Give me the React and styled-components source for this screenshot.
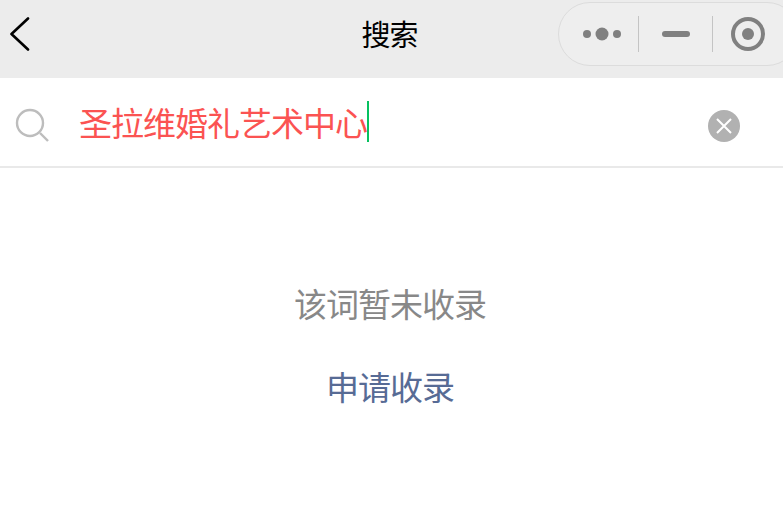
import styled, { createGlobalStyle } from "styled-components";

const GlobalStyle = createGlobalStyle`
  html, body {
    margin: 0;
    padding: 0;
    height: 100%;
    background: #fff;
    overflow: hidden;
    font-family: "Noto Sans CJK SC", "Liberation Sans", sans-serif;
  }
`;

const Page = styled.div`
  width: 783px;
  height: 513px;
  overflow: hidden;
  display: flex;
  flex-direction: column;
`;

const NavBar = styled.header`
  height: 78px;
  flex-shrink: 0;
  background: #ececec;
  display: grid;
  grid-template-columns: 1fr auto 1fr;
  align-items: start;
`;

const BackButton = styled.div`
  padding: 17px 0 0 10px;
  line-height: 0;
`;

const NavTitle = styled.div`
  font-size: 29px;
  letter-spacing: -1px;
  line-height: 34px;
  padding: 16px 4px 0 0;
  color: #000;
`;

const Capsule = styled.div`
  justify-self: end;
  margin: 2px -16px 0 0;
  width: 241px;
  height: 64px;
  box-sizing: border-box;
  display: flex;
  align-items: center;
  border: 1px solid #dcdcdc;
  border-radius: 32px;
  background: #eeeeee;
`;

const CapsuleCell = styled.div`
  width: ${(p) => p.$width}px;
  height: 36px;
  padding-left: ${(p) => p.$inset || 0}px;
  flex-shrink: 0;
  display: flex;
  align-items: center;
  justify-content: center;
  box-sizing: border-box;
  border-right: ${(p) => (p.$divider ? "1px solid #c4c4c4" : "none")};
  line-height: 0;
`;

const SearchBar = styled.div`
  height: 90px;
  flex-shrink: 0;
  box-sizing: border-box;
  border-bottom: 2px solid #e9e9e9;
  display: flex;
  align-items: center;
  padding: 0 43px 0 15px;
`;

const SearchIcon = styled.div`
  width: 34px;
  height: 36px;
  margin-top: 8px;
  line-height: 0;
  flex-shrink: 0;
`;

const Query = styled.div`
  flex: 1;
  margin-left: 30px;
  display: flex;
  align-items: center;
  font-size: 33px;
  letter-spacing: -1px;
  line-height: 42px;
  color: #fb5352;
  white-space: nowrap;
`;

const Caret = styled.span`
  width: 2px;
  height: 41px;
  margin-top: -1px;
  background: #07c160;
`;

const ClearButton = styled.div`
  width: 32px;
  height: 32px;
  margin-top: 8px;
  border-radius: 50%;
  background: #b1b1b1;
  display: flex;
  align-items: center;
  justify-content: center;
  flex-shrink: 0;
`;

const Empty = styled.main`
  display: flex;
  flex-direction: column;
  align-items: center;
  padding: 112px 3px 0 0;
`;

const EmptyText = styled.div`
  font-size: 33px;
  letter-spacing: -1px;
  line-height: 46px;
  color: #888888;
`;

const ApplyLink = styled.div`
  font-size: 33px;
  letter-spacing: -1px;
  line-height: 46px;
  margin-top: 37px;
  color: #576b95;
`;

const App = () => (
  <Page>
    <GlobalStyle />
    <NavBar>
      <BackButton>
        <svg width="20" height="34" viewBox="0 0 20 34" fill="none">
          <path d="M18 1.5 1.5 17 18 32.5" stroke="#000" strokeWidth="2.6" strokeLinecap="round" strokeLinejoin="round" />
        </svg>
      </BackButton>
      <NavTitle>搜索</NavTitle>
      <Capsule>
        <CapsuleCell $width={80} $inset={7} $divider>
          <svg width="38" height="14" viewBox="0 0 38 14" fill="#808080">
            <circle cx="4" cy="7" r="4" />
            <circle cx="19" cy="7" r="6.5" />
            <circle cx="34" cy="7" r="4" />
          </svg>
        </CapsuleCell>
        <CapsuleCell $width={74} $divider>
          <svg width="28" height="6" viewBox="0 0 28 6" fill="#808080">
            <rect width="28" height="6" rx="3" />
          </svg>
        </CapsuleCell>
        <CapsuleCell $width={70}>
          <svg width="34" height="34" viewBox="0 0 34 34" fill="none">
            <circle cx="17" cy="17" r="15" stroke="#808080" strokeWidth="4" />
            <circle cx="17" cy="17" r="6" fill="#808080" />
          </svg>
        </CapsuleCell>
      </Capsule>
    </NavBar>
    <SearchBar>
      <SearchIcon>
        <svg width="34" height="36" viewBox="0 0 34 36" fill="none">
          <circle cx="15" cy="15" r="13" stroke="#bdbdbd" strokeWidth="2.4" />
          <path d="M25 25 33 33" stroke="#bdbdbd" strokeWidth="2.4" />
        </svg>
      </SearchIcon>
      <Query>
        圣拉维婚礼艺术中心
        <Caret />
      </Query>
      <ClearButton>
        <svg width="18" height="18" viewBox="0 0 18 18" fill="none">
          <path d="M2 2 16 16M16 2 2 16" stroke="#fff" strokeWidth="2" />
        </svg>
      </ClearButton>
    </SearchBar>
    <Empty>
      <EmptyText>该词暂未收录</EmptyText>
      <ApplyLink>申请收录</ApplyLink>
    </Empty>
  </Page>
);

export default App;
